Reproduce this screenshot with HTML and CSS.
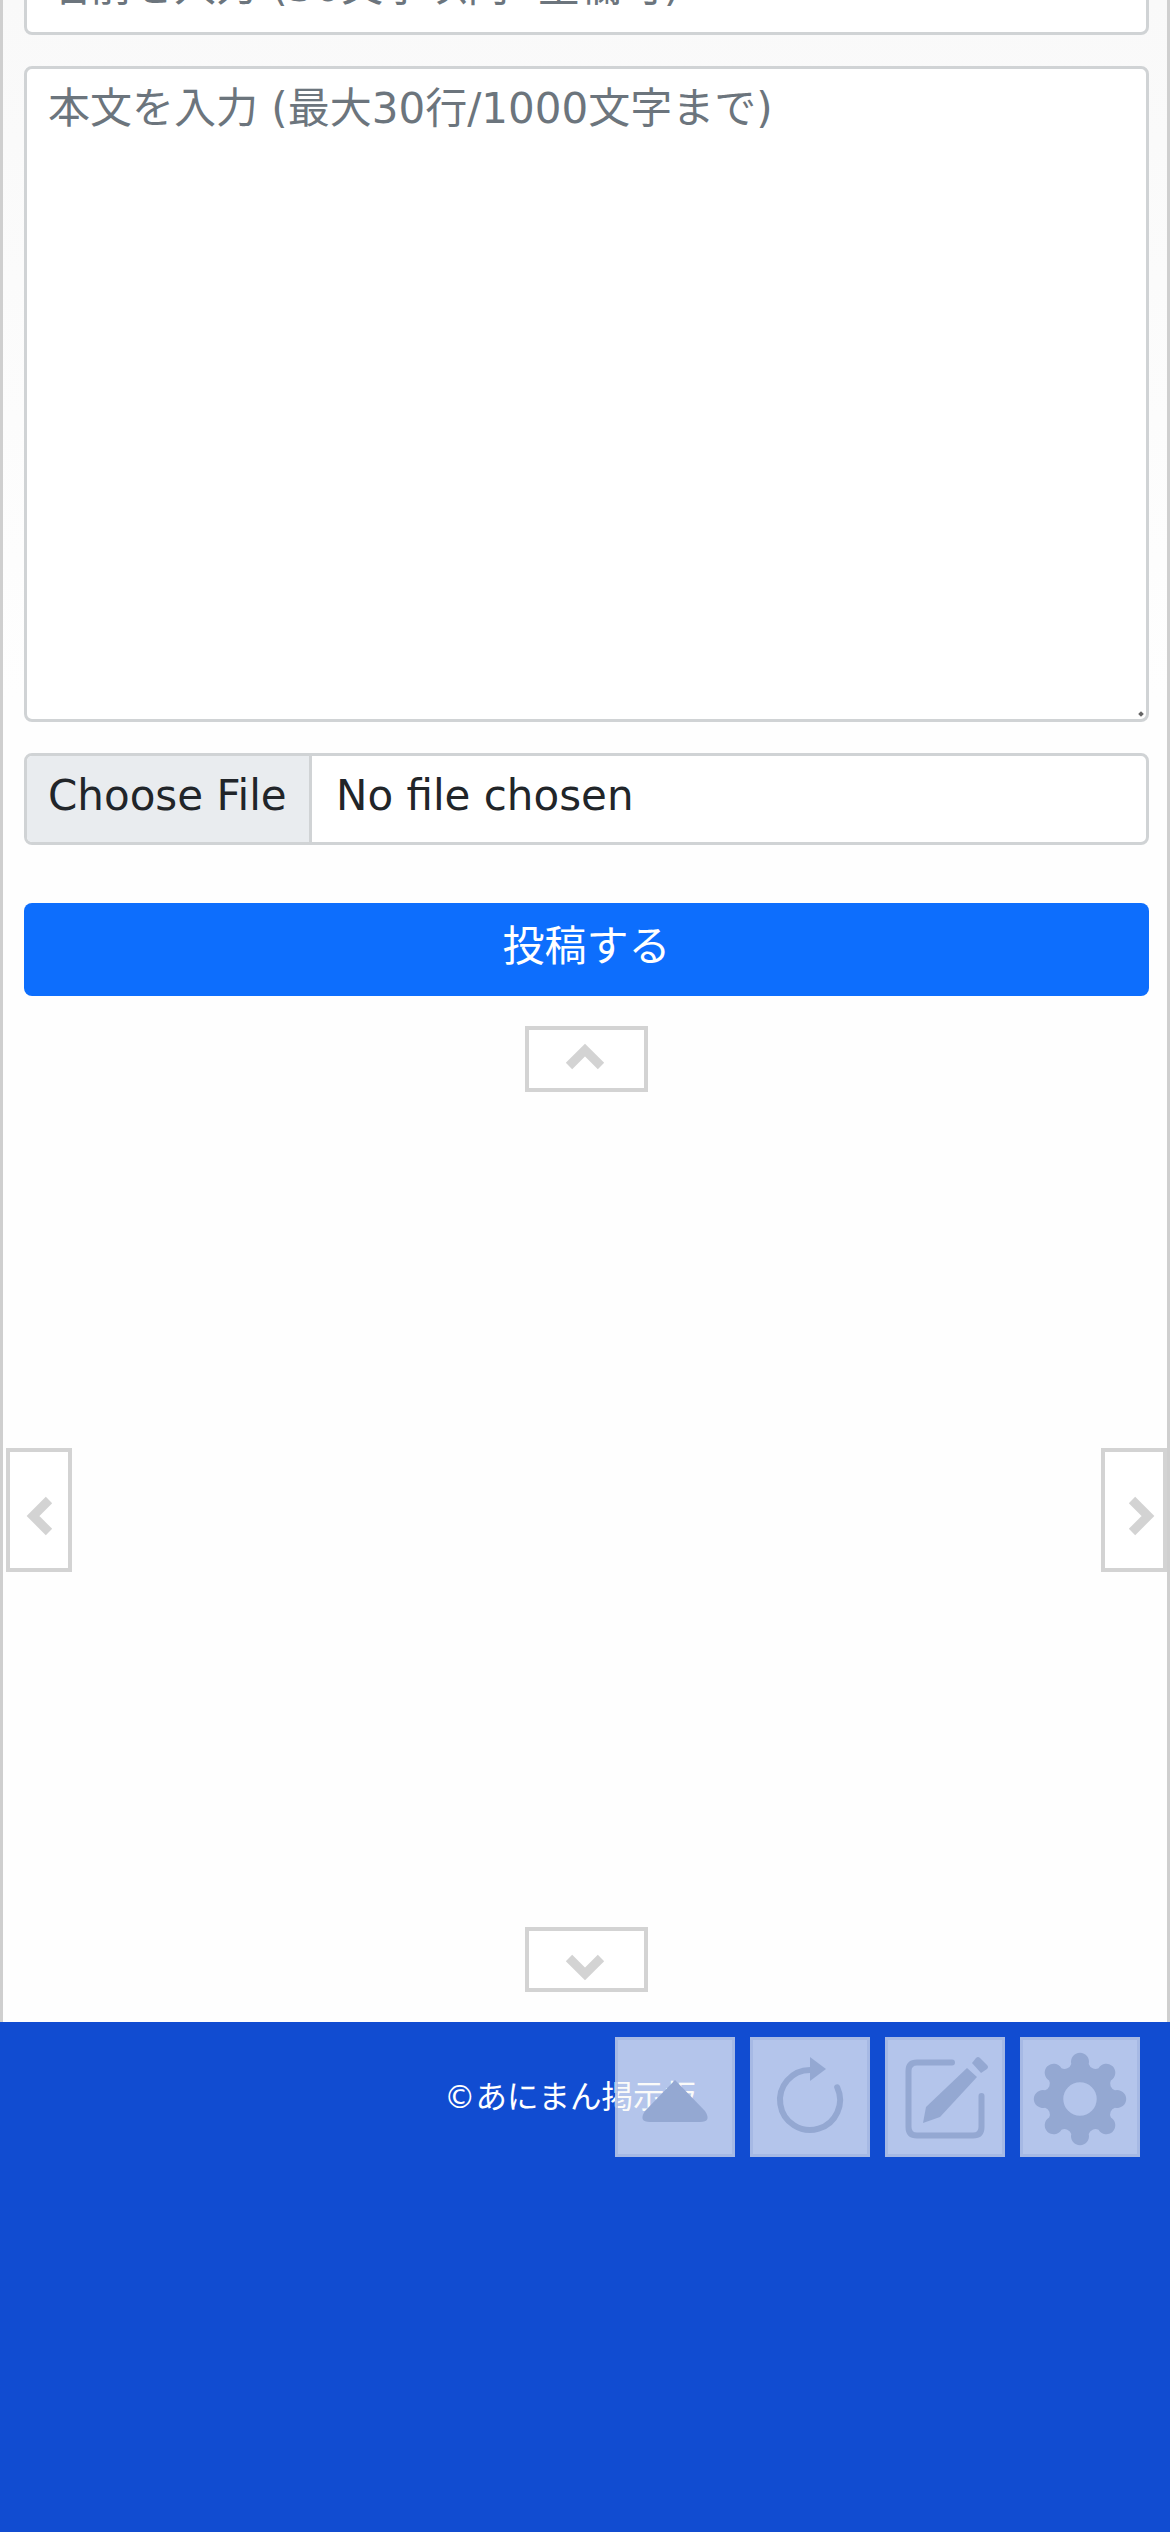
FILE: index.html
```html
<!DOCTYPE html>
<html lang="ja">
<head>
<meta charset="utf-8">
<title>あにまん掲示板</title>
<link rel="stylesheet" href="styles.css">
</head>
<body>
<div class="page">
  <main class="content">
    <form class="post-form">
      <input class="field name-field" type="text" placeholder="名前を入力 (30文字以内 -空欄可)">
      <div class="field body-field">
        <textarea class="body-input" placeholder="本文を入力 (最大30行/1000文字まで)"></textarea>
      </div>
      <div class="field file-field">
        <span class="file-button">Choose File</span>
        <span class="file-name">No file chosen</span>
      </div>
      <button class="submit" type="button">投稿する</button>
    </form>
    <a class="nav nav-up"><svg viewBox="0 0 40 28" width="40" height="28"><path class="chev" d="M4 24 20 8l16 16"/></svg></a>
    <a class="nav nav-left"><svg viewBox="0 0 28 40" width="28" height="40"><path class="chev" d="M24 4 8 20l16 16"/></svg></a>
    <a class="nav nav-right"><svg viewBox="0 0 28 40" width="28" height="40"><path class="chev" d="m4 4 16 16L4 36"/></svg></a>
    <a class="nav nav-down"><svg viewBox="0 0 40 28" width="40" height="28"><path class="chev" d="M4 4l16 16L36 4"/></svg></a>
  </main>
  <footer class="footer">
    <p class="copyright">©あにまん掲示板</p>
    <div class="tools">
      <a class="tool"><svg viewBox="0 0 120 120" width="120" height="120"><path class="ink" d="M60 43 90 74q7 11-5 11H35q-12 0-5-11z"/></svg></a>
      <a class="tool"><svg viewBox="0 0 120 120" width="120" height="120"><path class="line" d="M60 33A30 30 0 1 0 87.2 50.3"/><path class="ink" d="M60 20 76 32 60 44z"/></svg></a>
      <a class="tool"><svg viewBox="0 0 120 120" width="120" height="120"><path class="line" d="M67 25.500H32q-8.500 0-8.500 8.500v56q0 8.500 8.500 8.500h56q8.500 0 8.500-8.500V59"/><path class="ink" d="M38 86 41 70 82 31 92 40 55 80z"/><path class="ink" d="M87 26 91 21q2-2 4 0l7 7q2 2 0 4l-6 4z"/></svg></a>
      <a class="tool"><svg viewBox="0 0 120 120" width="120" height="120"><path class="ink" fill-rule="evenodd" d="M51.290 27.070A9 9 0 1 1 68.710 27.070A7 7 0 0 0 78.540 31.140A9 9 0 1 1 90.860 43.460A7 7 0 0 0 94.930 53.290A9 9 0 1 1 94.930 70.710A7 7 0 0 0 90.860 80.540A9 9 0 1 1 78.540 92.860A7 7 0 0 0 68.710 96.930A9 9 0 1 1 51.290 96.930A7 7 0 0 0 41.460 92.860A9 9 0 1 1 29.140 80.540A7 7 0 0 0 25.070 70.710A9 9 0 1 1 25.070 53.290A7 7 0 0 0 29.140 43.460A9 9 0 1 1 41.460 31.140A7 7 0 0 0 51.290 27.070ZM60 45.300a16.700 16.700 0 1 0 0 33.400a16.700 16.700 0 0 0 0-33.400Z"/></svg></a>
    </div>
  </footer>
</div>
</body>
</html>
```
FILE: styles.css
```css
* { box-sizing: border-box; }
html, body { margin: 0; padding: 0; }
body {
  font-family: "DejaVu Sans", "Noto Sans CJK JP", sans-serif;
  color: #212529;
  background: #fff;
}
.page {
  position: relative;
  width: 1170px;
  height: 2532px;
  overflow: hidden;
  display: flex;
  flex-direction: column;
}
.content {
  position: relative;
  height: 2022px;
  flex: none;
  border-left: 3px solid #cfcfcf;
  border-right: 3px solid #cfcfcf;
  background: linear-gradient(#f9f9f9, #fefefe 700px);
  padding: 0 18px 0 21px;
}
.post-form {
  display: flex;
  flex-direction: column;
  margin-top: -60px;
}
.field {
  width: 100%;
  border: 3px solid #d0d3d5;
  border-radius: 8px;
  background: #fff;
  font: inherit;
  font-size: 42px;
}
.name-field {
  height: 95px;
  padding: 0 21px 2px;
  margin-bottom: 31px;
  color: #212529;
}
.name-field::placeholder, .body-input::placeholder { color: #6c757d; opacity: 1; }
.body-field {
  position: relative;
  height: 656px;
  margin-bottom: 31px;
  display: flex;
}
.body-field::after {
  content: "";
  position: absolute;
  right: 3px;
  bottom: 3px;
  width: 4px;
  height: 4px;
  background: #666;
  transform: rotate(45deg);
}
.body-input {
  flex: 1;
  border: 0;
  outline: 0;
  resize: none;
  background: transparent;
  border-radius: 6px;
  padding: 8px 21px;
  font: inherit;
  font-size: 42px;
  line-height: 63px;
}
.file-field {
  height: 92px;
  display: flex;
  align-items: stretch;
  overflow: hidden;
  margin-bottom: 58px;
}
.file-button {
  width: 285px;
  flex: none;
  background: #e9ecef;
  border-right: 3px solid #d0d3d5;
  display: flex;
  align-items: center;
  padding: 0 0 8px 21px;
}
.file-name {
  display: flex;
  align-items: center;
  padding: 0 0 8px 24px;
}
.submit {
  width: 100%;
  height: 93px;
  border: 0;
  border-radius: 8px;
  background: #0d6efd;
  color: #fff;
  font: inherit;
  font-size: 42px;
  padding: 0 0 14px;
}
.nav {
  position: absolute;
  border: 4px solid #d3d3d3;
  background: #fff;
  display: flex;
  align-items: center;
  justify-content: center;
}
.chev { fill: none; stroke: #d3d3d3; stroke-width: 9; }
.nav-up { left: 522px; top: 1026px; width: 123px; height: 66px; }
.nav-down { left: 522px; top: 1927px; width: 123px; height: 65px; }
.nav-left { left: 3px; top: 1448px; width: 66px; height: 124px; }
.nav-right { right: 0; top: 1448px; width: 66px; height: 124px; }
.nav-left svg { margin-top: 12px; margin-right: 1px; }
.nav-right svg { margin-top: 12px; margin-left: 15px; }
.nav-up svg { margin-top: -6px; margin-right: 3px; }
.nav-down svg { margin-top: 16px; margin-right: 4px; }
.footer {
  position: relative;
  flex: 1;
  background: #114cd1;
  color: #fff;
}
.copyright {
  margin: 0;
  padding-top: 55px;
  padding-left: 444px;
  font-size: 31.500px;
  line-height: 40px;
}
.tools {
  position: absolute;
  top: 15px;
  right: 30px;
  display: flex;
  gap: 15px;
}
.tool {
  width: 120px;
  height: 120px;
  background: rgba(250, 250, 247, 0.7);
  border: 3px solid rgba(160, 180, 225, 0.7);
  display: flex;
  align-items: center;
  justify-content: center;
}
.tool svg { flex: none; margin: -3px; }
.ink { fill: #94a8d2; }
.line { fill: none; stroke: #94a8d2; stroke-width: 6; stroke-linecap: round; }
```
